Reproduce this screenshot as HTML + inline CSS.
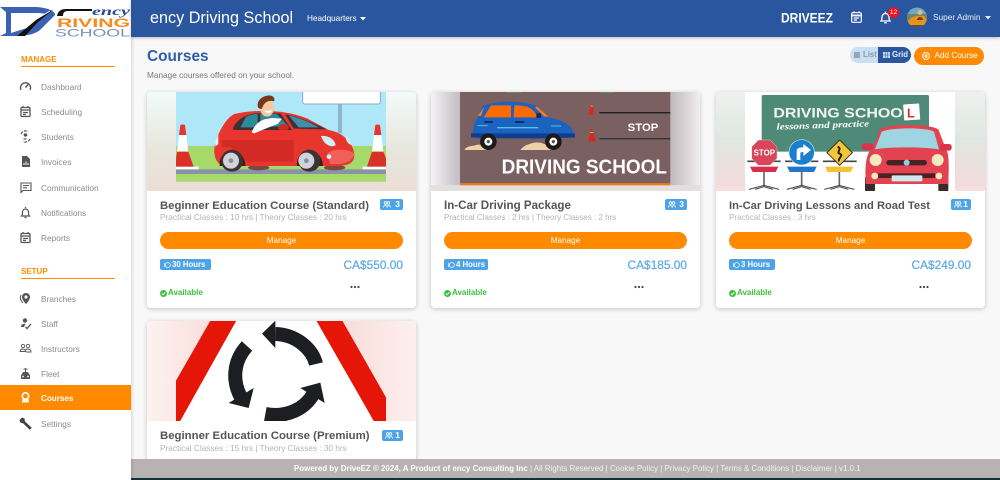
<!DOCTYPE html>
<html lang="en"><head><meta charset="utf-8"><title>Courses</title>
<style>
*{box-sizing:border-box}
html,body{margin:0;padding:0;width:1000px;height:480px;overflow:hidden;background:#f8f8f8;font-family:"Liberation Sans",sans-serif;color:#888}
.a{position:absolute;white-space:nowrap}
#side{position:absolute;left:0;top:0;width:131px;height:480px;background:#fff;box-shadow:1px 0 3px rgba(0,0,0,.15);z-index:3}
#top{position:absolute;left:131px;top:0;width:869px;height:37px;background:#2a569f;box-shadow:0 1px 3px rgba(0,0,0,.25);z-index:3}
.sec{position:absolute;left:21px;width:94px;height:10px;color:#ff8c00;font-weight:700;font-size:8px;line-height:10px}
.ul{position:absolute;left:21px;width:94px;height:1px;background:#ff8c00}
.nav{position:absolute;left:0;width:131px;height:25px;line-height:26px;font-size:8.3px;color:#8a8a8a;padding-left:41px}
.nav svg{position:absolute;left:19px;top:6px;width:13px;height:13px}
.nav.on{background:#ff8a00;color:#fff;font-weight:700;line-height:27px;font-size:8.1px}
.card{position:absolute;width:269px;background:#fff;border-radius:4px;box-shadow:0 1px 5px rgba(0,0,0,.22);overflow:hidden}
.img{position:absolute;left:0;top:0;width:269px;height:99px;overflow:hidden}
.img svg{position:absolute;width:270px;height:110px}
.title{position:absolute;left:13px;top:107px;font-weight:700;font-size:11.6px;line-height:14px;color:#555;white-space:nowrap}
.sub{position:absolute;left:13px;top:120px;font-size:8.1px;line-height:11px;color:#b3b3b3;white-space:nowrap}
.bdg{position:absolute;top:107px;height:11px;border-radius:2px;background:#4da3e8;color:#fff;font-weight:700;font-size:8.5px;line-height:11px;text-align:right;padding-right:3px}
.bdg svg{position:absolute;left:3px;top:2px;width:8px;height:7px}
.mg{position:absolute;left:13px;top:140px;width:243px;height:17px;border-radius:9px;background:#ff8a00;color:#fff;text-align:center;font-size:8.2px;line-height:17px}
.hrs{position:absolute;left:13px;top:167px;height:11px;border-radius:2px;background:#4da3e8;color:#fff;font-weight:700;font-size:7.8px;line-height:11px;padding-left:12px}
.hrs svg{position:absolute;left:4px;top:2.5px;width:7px;height:6px}
.price{position:absolute;right:13px;top:166px;font-size:11.9px;line-height:14px;color:#5aa9e6;-webkit-text-stroke:.2px #5aa9e6}
.av{position:absolute;left:21px;top:196px;font-weight:700;font-size:8px;line-height:10px;color:#3cc13b;white-space:nowrap}
.av svg{position:absolute;left:-8px;top:1.5px;width:7px;height:7px}
.dots{position:absolute;left:203px;top:190px;width:10px;height:10px}
#foot{position:absolute;left:131px;top:459px;width:869px;height:19px;background:#b8b3b0;z-index:2;font-size:7.95px;line-height:19px;color:#f2f0ee}
#foot span{position:absolute;left:163px;white-space:nowrap}
#dark{position:absolute;left:131px;top:478px;width:869px;height:2px;background:#12303c;z-index:2}
</style></head><body>

<div id="side">
<svg class="a" style="left:0;top:0" width="131" height="38" viewBox="0 0 131 38">
<path d="M0 7H34C48 7 56 12 55 15L40 30C34 35 24 36 14 36H0L6 33V12Z" fill="#3a62b0"/>
<path d="M11 13H33C38 13 42 13 45 14L27 28 11 33Z" fill="#fff"/>
<path d="M54 9 36 20 17 36H25L38 22Z" fill="#111"/>
<path d="M50 11 40 17" stroke="#fff" stroke-width="1"/>
<path d="M57 16C58 11 61 9 66 9H92V11H68C64 11 63 13 63 16Z" fill="#111"/>
<text x="92" y="15" font-family="Liberation Serif" font-style="italic" font-weight="700" font-size="12" fill="#2b4a90" textLength="38" lengthAdjust="spacingAndGlyphs">ency</text>
<text x="57" y="27" font-weight="700" font-size="11.5" fill="#f58a1f" textLength="73" lengthAdjust="spacingAndGlyphs">RIVING</text>
<text x="55" y="36.5" font-size="11" fill="#7a90b6" textLength="75" lengthAdjust="spacingAndGlyphs">SCHOOL</text>
</svg>
<div class="sec" style="top:55px">MANAGE</div><div class="ul" style="top:66px"></div>
<div class="nav" style="top:74px"><svg viewBox="0 0 13 13" fill="none" stroke="#555" stroke-width="1.4"><path d="M2 10A5 5 0 1 1 11 10"/><path d="M6.5 7.5 9 4.5"/></svg>Dashboard</div>
<div class="nav" style="top:99px"><svg viewBox="0 0 13 13" fill="none" stroke="#555" stroke-width="1.3"><rect x="2" y="2.5" width="9" height="9" rx="1"/><path d="M2 5H11M4 1V3M9 1V3M4 7.5H9M4 9.5H7"/></svg>Scheduling</div>
<div class="nav" style="top:124px"><svg viewBox="0 0 13 13" fill="none" stroke="#555" stroke-width="1.2"><circle cx="6.5" cy="5" r="1.2" fill="#555"/><path d="M4.5 9H8.5M2 4A5 5 0 0 1 9 1.5M11 9A5 5 0 0 1 4 11.5" stroke-dasharray="3 1"/></svg>Students</div>
<div class="nav" style="top:149px"><svg viewBox="0 0 13 13"><path d="M3 1H8L11 4V12H3Z" fill="#555"/><path d="M5 10V8M7 10V6.5M9 10V8" stroke="#fff"/></svg>Invoices</div>
<div class="nav" style="top:175px"><svg viewBox="0 0 13 13" fill="none" stroke="#555" stroke-width="1.1"><path d="M2 2H12V9.5H4L2 11.5Z"/><path d="M4 4.5H10M4 6.8H8"/></svg>Communication</div>
<div class="nav" style="top:200px"><svg viewBox="0 0 13 13" fill="none" stroke="#555" stroke-width="1.2"><path d="M2.5 10H10.5C9.5 9 9.5 7.5 9.5 6A3 3 0 0 0 3.5 6C3.5 7.5 3.5 9 2.5 10ZM5.5 11.5H7.5M6.5 2V1"/></svg>Notifications</div>
<div class="nav" style="top:225px"><svg viewBox="0 0 13 13" fill="none" stroke="#555" stroke-width="1.3"><rect x="2" y="2.5" width="9" height="9" rx="1"/><path d="M2 5H11M4 1V3M9 1V3M4 7.5H9M4 9.5H7"/></svg>Reports</div>
<div class="sec" style="top:267px">SETUP</div><div class="ul" style="top:278px"></div>
<div class="nav" style="top:286px"><svg viewBox="0 0 13 13"><path d="M7 1A4 4 0 0 1 11 5C11 8 7 12 7 12S3 8 3 5A4 4 0 0 1 7 1Z" fill="#555"/><circle cx="7" cy="5" r="1.6" fill="#fff"/><path d="M2 3C0.5 6 2 9 4 11" stroke="#555" fill="none"/></svg>Branches</div>
<div class="nav" style="top:311px"><svg viewBox="0 0 13 13"><circle cx="6" cy="3.5" r="2.2" fill="#555"/><path d="M2 10C2 7.5 4 6.5 6.5 6.8L5 10Z" fill="#555"/><path d="M6.5 10 8 11.5 12 7" stroke="#555" fill="none" stroke-width="1.3"/></svg>Staff</div>
<div class="nav" style="top:336px"><svg viewBox="0 0 13 13" fill="none" stroke="#555" stroke-width=".9"><circle cx="4" cy="4" r="1.7"/><circle cx="9" cy="4" r="1.7"/><path d="M1 10C1 7.5 2.5 7 4 7S6.5 7.5 6.5 9.5H1M6.5 9.5C6.5 7.5 7.5 7 9 7S12 7.5 12 10H7"/></svg>Instructors</div>
<div class="nav" style="top:361px"><svg viewBox="0 0 13 13"><path d="M3 7 4 5H9L10 7 11 8V12H2V8Z" fill="#555"/><path d="M4.5 2.500C5.500 1.500 7.500 1.500 8.500 2.500M6.500 2V5" stroke="#555" fill="none"/><circle cx="4" cy="9.500" r=".9" fill="#fff"/><circle cx="9" cy="9.500" r=".9" fill="#fff"/></svg>Fleet</div>
<div class="nav on" style="top:385px"><svg viewBox="0 0 13 13"><circle cx="6.500" cy="5" r="3.200" fill="none" stroke="#fff" stroke-width="1.600"/><path d="M3.500 8 3 12 5 11 6.500 12 8 11 10 12 9.500 8Z" fill="#fff"/></svg>Courses</div>
<div class="nav" style="top:411px"><svg viewBox="0 0 13 13"><path d="M0.500 3 3 .5 5.500 1.500 6 4.500 12.800 10.800 10.800 12.800 4 6.200 1.500 5.800Z" fill="#444"/></svg>Settings</div>
</div>

<div id="top">
<div class="a" style="left:19px;top:8px;font-size:16.2px;line-height:20px;color:#fff">ency Driving School</div>
<div class="a" style="left:176px;top:13px;font-size:8.2px;line-height:12px;color:#fff">Headquarters</div>
<svg class="a" style="left:229px;top:17px" width="6" height="4"><path d="M0 0H6L3 3.5Z" fill="#fff"/></svg>
<svg class="a" style="left:650px;top:8px" width="54" height="20"><text x="0" y="14.500" font-weight="700" font-size="13.500" fill="#fff" textLength="52" lengthAdjust="spacingAndGlyphs">DRIVEEZ</text></svg>
<svg class="a" style="left:720px;top:11px" width="11" height="12" viewBox="0 0 11 12" fill="none" stroke="#fff" stroke-width="1.2"><rect x=".7" y="1.7" width="9.6" height="9.6" rx="1.2"/><path d="M.7 4.5H10.3" stroke-width="1.8"/><path d="M3 .2V2M8 .2V2M2.8 7H8.2M2.8 9H6"/></svg>
<svg class="a" style="left:749px;top:11px" width="11" height="13" viewBox="0 0 11 13" fill="none" stroke="#fff" stroke-width="1.3"><path d="M1 10H10C9 9 9 7.5 9 6A3.5 3.5 0 0 0 2 6C2 7.5 2 9 1 10ZM4.2 11.8H6.8M5.5 2V.8"/></svg>
<div class="a" style="left:757px;top:7px;width:11px;height:11px;border-radius:50%;background:#f01020;color:#fff;font-size:6.5px;line-height:11px;text-align:center">12</div>
<svg class="a" style="left:776px;top:7px" width="20" height="21" viewBox="0 0 20 21"><defs><clipPath id="avc"><circle cx="10" cy="10.500" r="10"/></clipPath></defs><g clip-path="url(#avc)"><rect width="20" height="21" fill="#6fa8c8"/><rect y="7" width="20" height="6" fill="#6a8a5a"/><path d="M1 15C3 10 8 9 11 9H17L20 13V18H1Z" fill="#e8931c"/><rect y="18" width="20" height="3" fill="#5a5048"/><circle cx="13" cy="5.500" r="2.500" fill="#e7b48c"/><path d="M10 13C10 9 16 9 16 13Z" fill="#6a4630"/></g></svg>
<div class="a" style="left:802px;top:11px;font-size:8.3px;line-height:12px;color:#e8eef8">Super Admin</div>
<svg class="a" style="left:854px;top:16px" width="6" height="4"><path d="M0 0H6L3 3.500Z" fill="#e8eef8"/></svg>
</div>

<div class="a" style="left:147px;top:47px;font-size:15.4px;line-height:20px;font-weight:700;color:#2f5ea8">Courses</div>
<div class="a" style="left:147px;top:69.500px;font-size:8.250px;line-height:11px;color:#777">Manage courses offered on your school.</div>

<div class="a" style="left:850px;top:47px;width:28px;height:16px;background:#c7e0f5;border-radius:8px 0 0 8px;font-size:7.800px;line-height:16px;color:#8d9aa6;padding-left:13px;font-weight:700">List<svg class="a" style="left:4px;top:5px" width="6" height="6"><rect width="6" height="6" fill="#9aa4ad"/></svg></div>
<div class="a" style="left:878px;top:47px;width:33px;height:16px;background:#2a569f;border-radius:0 8px 8px 0;font-size:7.800px;line-height:16px;color:#e6eef8;padding-left:14px;font-weight:700">Grid<svg class="a" style="left:5px;top:5px" width="7" height="6"><rect width="7" height="6" fill="#c5d6ec"/><path d="M2.300 0V6M4.600 0V6M0 3H7" stroke="#2a569f" stroke-width=".5"/></svg></div>
<div class="a" style="left:914px;top:47px;width:70px;height:18px;background:#ff8a00;border-radius:9px;font-size:8.200px;line-height:18px;color:#fff;padding-left:20.500px">Add Course<svg class="a" style="left:8px;top:5px" width="8" height="8" viewBox="0 0 8 8" fill="none" stroke="#fff"><circle cx="4" cy="4" r="3.400"/><path d="M4 2V6M2 4H6"/></svg></div>

<!-- Card 1 -->
<div class="card" style="left:147px;top:92px;height:216px">
<div class="img"><svg style="left:0;top:-2px" viewBox="0 0 810 330">
<defs><linearGradient id="g1" x1="0" x2="0" y1="0" y2="1"><stop offset="0" stop-color="#f2fbfb"/><stop offset=".55" stop-color="#e7e6dc"/><stop offset="1" stop-color="#ecdcd6"/></linearGradient></defs>
<rect width="810" height="330" fill="url(#g1)"/>
<rect x="87" y="5" width="630" height="270" fill="#aee8f8"/>
<rect x="87" y="168" width="630" height="107" fill="#a5d96a"/>
<rect x="87" y="238" width="630" height="14" fill="#8a92a8"/>
<rect x="573" y="40" width="12" height="90" fill="#8fb6cc"/>
<rect x="467" y="-8" width="233" height="50" rx="6" fill="#fff" stroke="#8fa9c0" stroke-width="3"/>
<rect x="87" y="230" width="68" height="8" fill="#fff"/><path d="M100 105C104 103 110 103 114 105L118 135H96Z" fill="#e8352e"/><path d="M96 135H118L124 185H90Z" fill="#fff"/><path d="M90 185H124L140 230H87V205Z" fill="#d93028"/>
<rect x="647" y="230" width="70" height="8" fill="#fff"/><path d="M685 105C689 103 695 103 699 105L703 135H681Z" fill="#e8352e"/><path d="M681 135H703L709 185H675Z" fill="#fff"/><path d="M675 185H709L717 205V230H660Z" fill="#d93028"/>
<ellipse cx="335" cy="233" rx="32" ry="8" fill="#7a4a40"/><ellipse cx="563" cy="233" rx="32" ry="8" fill="#7a4a40"/>
<path d="M202 175C208 135 235 85 262 72C330 56 420 60 480 85L545 120C590 128 620 160 622 195C622 222 600 228 565 228H240C215 228 200 210 202 175Z" fill="#e8352e"/>
<path d="M225 150H440V215H300L250 170 225 172Z" fill="#d42a26"/>
<path d="M258 115C268 88 300 70 335 70H400L435 120H260Z" fill="#3f3036"/>
<path d="M280 112 296 82C305 74 320 72 332 72V112Z" fill="#2d8a9b"/>
<path d="M340 72H390L425 110H340Z" fill="#2d8a9b"/>
<path d="M415 73C465 82 510 105 540 118L440 116Z" fill="#3f3036"/><path d="M425 76C460 84 495 100 515 112L455 112Z" fill="#3f8fa8"/>
<path d="M522 138C540 135 562 145 566 165 555 175 530 165 522 138Z" fill="#cfeef5"/><path d="M596 135C606 145 612 155 612 165 600 160 595 148 596 135Z" fill="#cfeef5"/>
<path d="M205 155 214 135 214 162 205 170Z" fill="#e4eef2"/>
<path d="M540 190C560 175 600 175 622 190 620 215 590 225 550 222Z" fill="#f0605a"/>
<circle cx="546" cy="200" r="7" fill="#cfeef5"/>
<path d="M314 127C322 105 338 92 352 88L375 84 405 86 392 102 365 112 322 130Z" fill="#fff"/>
<path d="M393 115C395 98 425 98 425 115 425 122 395 122 393 115Z" fill="#d42a26"/>
<ellipse cx="360" cy="54" rx="21" ry="26" fill="#f6c8a0"/><path d="M333 52C327 30 350 14 372 17 383 20 384 30 381 34 365 30 352 34 345 56 340 58 336 56 333 52Z" fill="#76391c"/><path d="M352 62C358 72 370 72 376 62Z" fill="#fff"/>
<path d="M218 228C214 170 290 165 296 228Z M450 228C446 170 525 165 528 228Z" fill="#3a1c1c"/>
<circle cx="255" cy="212" r="33" fill="#3f3234"/><circle cx="252" cy="212" r="24" fill="#cfd4da"/><circle cx="252" cy="212" r="7" fill="#8a8f96"/>
<circle cx="487" cy="212" r="33" fill="#3f3234"/><circle cx="478" cy="212" r="24" fill="#cfd4da"/><circle cx="478" cy="212" r="7" fill="#8a8f96"/>
</svg></div>
<div class="title" style="font-size:11.33px">Beginner Education Course (Standard)</div>
<div class="bdg" style="left:233px;width:23px"><svg viewBox="0 0 8 7" fill="none" stroke="#fff" stroke-width=".8"><circle cx="2.500" cy="2" r="1.300"/><circle cx="5.500" cy="2" r="1.300"/><path d="M.5 6.500C.5 4 4.500 4 4.500 6.500M4 6.500C4 4 7.500 4 7.500 6.500"/></svg>3</div>
<div class="sub" style="font-size:8.25px">Practical Classes : 10 hrs | Theory Classes : 20 hrs</div>
<div class="mg">Manage</div>
<div class="hrs" style="width:51px"><svg viewBox="0 0 7 6" fill="none" stroke="#fff" stroke-width=".7"><circle cx="3.800" cy="3" r="2.500"/><path d="M.5 1V5"/></svg>30 Hours</div>
<div class="price">CA$550.00</div>
<div class="av" style="left:21px"><svg viewBox="0 0 7 7"><circle cx="3.500" cy="3.500" r="3.500" fill="#3cc13b"/><path d="M1.800 3.500 3.100 4.800 5.300 2.400" stroke="#fff" fill="none"/></svg>Available</div>
<svg class="dots" viewBox="0 0 10 10"><circle cx="1.500" cy="5" r="1.100" fill="#444"/><circle cx="5" cy="5" r="1.100" fill="#444"/><circle cx="8.500" cy="5" r="1.100" fill="#444"/></svg>
</div>

<!-- Card 2 -->
<div class="card" style="left:431px;top:92px;height:216px">
<div class="img"><svg style="left:0;top:-2px" viewBox="0 0 810 330">
<defs><linearGradient id="g2" x1="0" x2="1"><stop offset="0" stop-color="#f4f3f3"/><stop offset=".1" stop-color="#c4c0c6"/><stop offset=".9" stop-color="#c4bec1"/><stop offset="1" stop-color="#f2f0f0"/></linearGradient></defs>
<rect width="810" height="330" fill="url(#g2)"/>
<rect y="285" width="810" height="45" fill="#e3dfde"/>
<rect x="87" y="5" width="631" height="275" fill="#7a6060"/><rect x="87" y="280" width="631" height="6" fill="#f47a0a"/>
<path d="M225 6H270M505 6H550" stroke="#4fae3a" stroke-width="4"/>
<path d="M125 135 128 105 155 48C200 30 280 30 320 50L352 82C395 90 425 105 430 135Z" fill="#1c62c0"/>
<path d="M120 130H432V142C350 146 200 146 120 142Z" fill="#0f3e90"/>
<path d="M158 82 180 46H240V82Z" fill="#ff6a00"/><path d="M248 82 250 46C285 46 305 50 320 82Z" fill="#ff6a00"/>
<path d="M318 50 352 80 340 80 312 52Z M140 78 160 50 150 78Z" fill="#ff7a1a"/>
<path d="M198 113H322" stroke="#4fc3e0" stroke-width="4"/><path d="M140 107H170M360 108H390" stroke="#4fc3e0" stroke-width="3"/>
<rect x="160" y="93" width="26" height="6" rx="2" fill="#0b2c66"/><rect x="252" y="93" width="28" height="6" rx="2" fill="#0b2c66"/>
<rect x="316" y="70" width="14" height="14" fill="#1a2a50"/>
<path d="M100 180C110 165 125 170 135 165 150 160 165 172 175 180Z M268 180C280 165 295 162 310 158 330 155 355 165 368 180Z" fill="#f0d0a8"/>
<circle cx="172" cy="155" r="25" fill="#1e1a1c"/><circle cx="172" cy="155" r="12" fill="#fff"/><circle cx="172" cy="155" r="5" fill="#555"/>
<circle cx="367" cy="155" r="25" fill="#1e1a1c"/><circle cx="367" cy="155" r="12" fill="#fff"/><circle cx="367" cy="155" r="5" fill="#555"/>
<path d="M482 37 490 74H472Z" fill="#e0251b"/><path d="M482 112 494 155H472Z" fill="#e0251b"/><path d="M479 48H485M477 128H487" stroke="#e8dcdc" stroke-width="2"/>
<path d="M505 68H718" stroke="#222" stroke-width="4"/><path d="M505 146H718" stroke="#333" stroke-width="4"/>
<text x="590" y="123" font-weight="700" font-size="34" fill="#fff" textLength="92" lengthAdjust="spacingAndGlyphs">STOP</text>
<text x="212" y="251" font-weight="700" font-size="60" fill="#fff" textLength="496" lengthAdjust="spacingAndGlyphs">DRIVING SCHOOL</text>
</svg></div>
<div class="title">In-Car Driving Package</div>
<div class="bdg" style="left:234px;width:22px"><svg viewBox="0 0 8 7" fill="none" stroke="#fff" stroke-width=".8"><circle cx="2.500" cy="2" r="1.300"/><circle cx="5.500" cy="2" r="1.300"/><path d="M.5 6.500C.5 4 4.500 4 4.500 6.500M4 6.500C4 4 7.500 4 7.500 6.500"/></svg>3</div>
<div class="sub" style="font-size:8px">Practical Classes : 2 hrs | Theory Classes : 2 hrs</div>
<div class="mg">Manage</div>
<div class="hrs" style="width:44px"><svg viewBox="0 0 7 6" fill="none" stroke="#fff" stroke-width=".7"><circle cx="3.800" cy="3" r="2.500"/><path d="M.5 1V5"/></svg>4 Hours</div>
<div class="price">CA$185.00</div>
<div class="av" style="left:21px"><svg viewBox="0 0 7 7"><circle cx="3.500" cy="3.500" r="3.500" fill="#3cc13b"/><path d="M1.800 3.500 3.100 4.800 5.300 2.400" stroke="#fff" fill="none"/></svg>Available</div>
<svg class="dots" viewBox="0 0 10 10"><circle cx="1.500" cy="5" r="1.100" fill="#444"/><circle cx="5" cy="5" r="1.100" fill="#444"/><circle cx="8.500" cy="5" r="1.100" fill="#444"/></svg>
</div>

<!-- Card 3 -->
<div class="card" style="left:716px;top:92px;height:216px">
<div class="img"><svg style="left:-1px;top:-2px" viewBox="0 0 810 330">
<defs><linearGradient id="g3" x1="0" x2="0" y1="0" y2="1"><stop offset="0" stop-color="#eff1ef"/><stop offset=".45" stop-color="#dfe6e2"/><stop offset=".85" stop-color="#f3dcdb"/><stop offset="1" stop-color="#f6e8e6"/></linearGradient></defs>
<rect width="810" height="330" fill="url(#g3)"/>
<rect x="90" y="5" width="630" height="300" fill="#fff"/>
<rect x="140" y="15" width="502" height="170" rx="5" fill="#4f8a78"/>
<text x="175" y="82" font-weight="700" font-size="42" fill="#f3f6ef" textLength="388" lengthAdjust="spacingAndGlyphs">DRIVING SCHOO</text>
<rect x="566" y="42" width="48" height="48" rx="2" fill="#fff" transform="rotate(-4 590 66)"/>
<text x="576" y="82" font-weight="700" font-size="38" fill="#d8312e">L</text>
<text x="185" y="119" font-family="Liberation Serif" font-style="italic" font-weight="700" font-size="27" fill="#fff" textLength="278" lengthAdjust="spacingAndGlyphs" transform="rotate(-2 185 119)">lessons and practice</text>
<g stroke="#666" stroke-width="5" fill="none"><path d="M147 245V288M260 245V288M373 245V288"/></g>
<g stroke="#444" stroke-width="3" fill="none"><path d="M102 298 147 286 192 298M215 298 260 286 305 298M328 298 373 286 418 298M120 298 147 290 174 298M233 298 260 290 287 298M346 298 373 290 400 298"/></g>
<path d="M97 214H197M210 214H310M324 214H425" stroke="#444" stroke-width="5"/>
<path d="M105 230H190L182 246H113Z" fill="#d8304a"/><path d="M216 230H305L297 246H224Z" fill="#2277c8"/><path d="M330 230H415L407 246H338Z" fill="#f2c230"/>
<path d="M130 150H165L186 171V205L165 226H130L110 205V171Z" fill="#d9455a" stroke="#efe" stroke-width="1"/>
<text x="116" y="197" font-weight="700" font-size="24" fill="#fff" textLength="64" lengthAdjust="spacingAndGlyphs">STOP</text>
<circle cx="260" cy="187" r="38" fill="#1b7fd0" stroke="#cfe3f3" stroke-width="2"/>
<path d="M245 210V182C245 174 255 172 265 172V162L288 180 265 198V186C258 186 256 187 256 192V210Z" fill="#fff"/>
<path d="M374 150 412 188 374 226 336 188Z" fill="#f3c635" stroke="#333" stroke-width="3"/>
<path d="M368 170C384 178 360 186 376 192 386 198 368 204 372 214" stroke="#222" stroke-width="6" fill="none"/>
<rect x="450" y="260" width="30" height="44" rx="4" fill="#3a2a2c"/><rect x="670" y="260" width="30" height="44" rx="4" fill="#3a2a2c"/>
<path d="M478 165 495 118C520 100 640 100 670 118L690 170C703 190 702 220 700 282H452C450 220 452 190 478 165Z" fill="#e34350"/>
<path d="M480 178 500 125C530 112 635 112 657 125L672 178C620 170 530 170 480 178Z" fill="#9fd5e2"/>
<rect x="440" y="160" width="36" height="20" rx="8" fill="#d9344a"/><rect x="674" y="162" width="36" height="20" rx="8" fill="#d9344a"/>
<rect x="514" y="210" width="122" height="16" rx="8" fill="#4a2226"/><circle cx="575" cy="218" r="9" fill="#8fd0dc"/>
<circle cx="482" cy="210" r="18" fill="#f5e9c0"/><circle cx="668" cy="210" r="18" fill="#f5e9c0"/>
<rect x="490" y="250" width="170" height="14" fill="#4a2226"/><circle cx="479" cy="258" r="10" fill="#f5e9c0"/><circle cx="672" cy="258" r="10" fill="#f5e9c0"/>
<rect x="530" y="256" width="92" height="18" rx="3" fill="#cfe8ee"/>
</svg></div>
<div class="title" style="font-size:11.15px">In-Car Driving Lessons and Road Test</div>
<div class="bdg" style="left:235px;width:20px"><svg viewBox="0 0 8 7" fill="none" stroke="#fff" stroke-width=".8"><circle cx="2.500" cy="2" r="1.300"/><circle cx="5.500" cy="2" r="1.300"/><path d="M.5 6.500C.5 4 4.500 4 4.500 6.500M4 6.500C4 4 7.500 4 7.500 6.500"/></svg>1</div>
<div class="sub">Practical Classes : 3 hrs</div>
<div class="mg">Manage</div>
<div class="hrs" style="width:46px"><svg viewBox="0 0 7 6" fill="none" stroke="#fff" stroke-width=".7"><circle cx="3.800" cy="3" r="2.500"/><path d="M.5 1V5"/></svg>3 Hours</div>
<div class="price" style="right:14px">CA$249.00</div>
<div class="av" style="left:21px"><svg viewBox="0 0 7 7"><circle cx="3.500" cy="3.500" r="3.500" fill="#3cc13b"/><path d="M1.800 3.500 3.100 4.800 5.300 2.400" stroke="#fff" fill="none"/></svg>Available</div>
<svg class="dots" viewBox="0 0 10 10"><circle cx="1.500" cy="5" r="1.100" fill="#444"/><circle cx="5" cy="5" r="1.100" fill="#444"/><circle cx="8.500" cy="5" r="1.100" fill="#444"/></svg>
</div>

<!-- Card 4 -->
<div class="card" style="left:147px;top:321px;height:150px">
<div class="img" style="height:100px"><svg style="left:0;top:-3px" viewBox="0 0 810 330">
<defs><linearGradient id="g4l" x1="0" x2="1"><stop offset="0" stop-color="#fdf2f0"/><stop offset="1" stop-color="#f4c9c5"/></linearGradient><linearGradient id="g4r" x1="0" x2="1"><stop offset="0" stop-color="#f5cdca"/><stop offset="1" stop-color="#fdf0ee"/></linearGradient></defs>
<rect x="0" width="405" height="330" fill="url(#g4l)"/><rect x="405" width="405" height="330" fill="url(#g4r)"/>
<path d="M190 8H586L717 238V312H87V188Z" fill="#fff"/>
<path d="M190 8H268L98 312H87V188Z" fill="#e51608"/>
<path d="M508 8H586L717 238V312H682Z" fill="#e51608"/>
<g fill="none" stroke="#1c1e22" stroke-width="42"><path d="M507 138C497 95 450 50 385 48"/><path d="M300 84C258 130 255 190 283 240"/><path d="M355 288C420 300 475 272 500 226"/></g>
<path d="M385 8 345 47 385 90Z M245 255 305 270 320 210Z M460 210 520 194 533 255Z" fill="#1c1e22"/>
</svg></div>
<div class="title" style="top:108px;font-size:11.4px">Beginner Education Course (Premium)</div>
<div class="bdg" style="left:235px;width:21px;top:109px"><svg viewBox="0 0 8 7" fill="none" stroke="#fff" stroke-width=".8"><circle cx="2.500" cy="2" r="1.300"/><circle cx="5.500" cy="2" r="1.300"/><path d="M.5 6.500C.5 4 4.500 4 4.500 6.500M4 6.500C4 4 7.500 4 7.500 6.500"/></svg>1</div>
<div class="sub" style="top:121.500px;font-size:8.25px">Practical Classes : 15 hrs | Theory Classes : 30 hrs</div>
</div>

<div id="foot"><span><b style="color:#fff">Powered by DriveEZ © 2024, A Product of ency Consulting Inc</b> | All Rights Reserved | Cookie Policy | Privacy Policy | Terms &amp; Conditions | Disclaimer | v1.0.1</span></div>
<div id="dark"></div>
</body></html>
